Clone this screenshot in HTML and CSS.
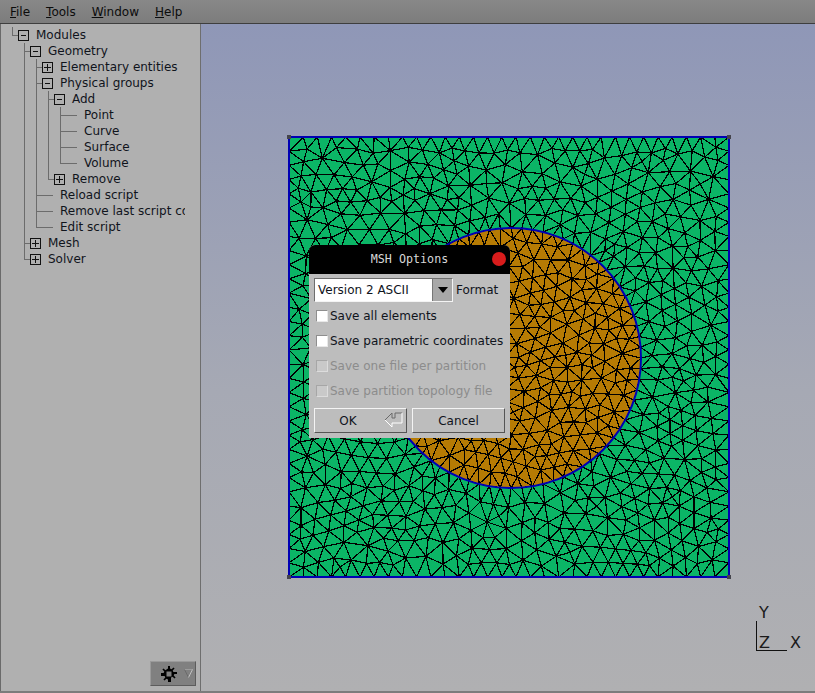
FILE: index.html
```html
<!DOCTYPE html>
<html lang="en">
<head>
<meta charset="utf-8">
<title>Gmsh</title>
<link rel="stylesheet" href="styles.css">
</head>
<body>
<nav class="menubar">
  <span class="menu m-file"><u>F</u>ile</span>
  <span class="menu m-tools"><u>T</u>ools</span>
  <span class="menu m-window"><u>W</u>indow</span>
  <span class="menu m-help"><u>H</u>elp</span>
</nav>
<div class="main">
  <aside class="side">
    <div class="tree">
      <div class="row"><i class="c l"></i><i class="box minus"></i><span class="lb">Modules</span></div>
      <div class="row"><i class="c"></i><i class="c t"></i><i class="box minus"></i><span class="lb">Geometry</span></div>
      <div class="row"><i class="c"></i><i class="c v"></i><i class="c t"></i><i class="box plus"></i><span class="lb">Elementary entities</span></div>
      <div class="row"><i class="c"></i><i class="c v"></i><i class="c t"></i><i class="box minus"></i><span class="lb">Physical groups</span></div>
      <div class="row"><i class="c"></i><i class="c v"></i><i class="c v"></i><i class="c t"></i><i class="box minus"></i><span class="lb">Add</span></div>
      <div class="row"><i class="c"></i><i class="c v"></i><i class="c v"></i><i class="c v"></i><i class="c t"></i><i class="dash"></i><span class="lb">Point</span></div>
      <div class="row"><i class="c"></i><i class="c v"></i><i class="c v"></i><i class="c v"></i><i class="c t"></i><i class="dash"></i><span class="lb">Curve</span></div>
      <div class="row"><i class="c"></i><i class="c v"></i><i class="c v"></i><i class="c v"></i><i class="c t"></i><i class="dash"></i><span class="lb">Surface</span></div>
      <div class="row"><i class="c"></i><i class="c v"></i><i class="c v"></i><i class="c v"></i><i class="c l"></i><i class="dash"></i><span class="lb">Volume</span></div>
      <div class="row"><i class="c"></i><i class="c v"></i><i class="c v"></i><i class="c l"></i><i class="box plus"></i><span class="lb">Remove</span></div>
      <div class="row"><i class="c"></i><i class="c v"></i><i class="c t"></i><i class="dash"></i><span class="lb">Reload script</span></div>
      <div class="row"><i class="c"></i><i class="c v"></i><i class="c t"></i><i class="dash"></i><span class="lb">Remove last script command</span></div>
      <div class="row"><i class="c"></i><i class="c v"></i><i class="c l"></i><i class="dash"></i><span class="lb">Edit script</span></div>
      <div class="row"><i class="c"></i><i class="c t"></i><i class="box plus"></i><span class="lb">Mesh</span></div>
      <div class="row"><i class="c"></i><i class="c l"></i><i class="box plus"></i><span class="lb">Solver</span></div>
    </div>
    <div class="gearbar">
      <button class="gear" type="button">
        <svg class="gear-ico" width="16" height="16" viewBox="0 0 16 16">
          <path d="M7 0h2v2.6l1.6.7 1.9-1.9 1.1 1.1-1.9 1.9.7 1.6H16v2h-2.6l-.7 1.6 1.9 1.9-1.1 1.1-1.9-1.9-1.6.7V16H7v-2.6l-1.6-.7-1.9 1.9-1.1-1.1 1.9-1.9-.7-1.6H0V7h2.6l.7-1.6-1.9-1.9 1.1-1.1 1.9 1.9L7 2.6z" fill="#000"/>
          <rect x="5.5" y="5.5" width="5" height="5" fill="#808080"/>
        </svg>
        <svg class="tri-ico" width="9" height="9" viewBox="0 0 9 9">
          <path d="M.5 .5H8.5" stroke="#9c9c9c" fill="none"/>
          <path d="M.5 .5L4.5 8.5" stroke="#6a6a6a" fill="none"/>
          <path d="M8.5 .5L4.5 8.5" stroke="#c0c0c0" fill="none"/>
        </svg>
      </button>
    </div>
  </aside>
  <section class="view">
    <svg id="mesh" class="mesh" width="446" height="446" viewBox="286 134 446 446" shape-rendering="crispEdges"></svg>
    <div class="axes">
      <span class="ax ax-y">Y</span>
      <span class="ax ax-z">Z</span>
      <span class="ax ax-x">X</span>
    </div>
    <div class="dialog">
      <header class="dlg-title"><span>MSH Options</span><i class="dot"></i></header>
      <div class="dlg-body">
        <div class="format">
          <div class="choice"><span class="choice-val">Version 2 ASCII</span><span class="choice-btn"><i class="arrow"></i></span></div>
          <span class="format-lb">Format</span>
        </div>
        <label class="opt"><i class="cb"></i>Save all elements</label>
        <label class="opt"><i class="cb"></i>Save parametric coordinates</label>
        <label class="opt off"><i class="cb"></i>Save one file per partition</label>
        <label class="opt off"><i class="cb"></i>Save partition topology file</label>
        <div class="btns">
          <button class="btn" type="button"><span class="ok">OK</span>
            <svg class="ret" width="19" height="16" viewBox="0 0 19 16">
              <path d="M1 8L8 1V6H11V1H18" fill="none" stroke="#6a6a6a"/>
              <path d="M1 8L8 15V11H18V1" fill="none" stroke="#fff"/>
            </svg>
          </button>
          <button class="btn" type="button">Cancel</button>
        </div>
      </div>
    </div>
  </section>
</div>
<script src="script.js"></script>
</body>
</html>
```

FILE: styles.css
```css
* { box-sizing: border-box; }
html, body { margin: 0; height: 100%; }
body {
  width: 815px; height: 693px; overflow: hidden;
  font: 12px/16px "DejaVu Sans", sans-serif; color: #10141c;
  display: flex; flex-direction: column; background: #b0b0b0;
}
.menubar {
  height: 24px; flex: none; display: flex; align-items: center; padding-left: 10px;
  background: linear-gradient(#888, #7c7c7c); border-bottom: 1px solid #3e3e3e;
  color: #0c0c0c;
}
.m-file { margin-right: 16px; }
.m-tools { margin-right: 16px; }
.m-window { margin-right: 16px; }
.main { flex: 1; display: flex; min-height: 0; border-bottom: 2px solid #7c7c7c; }
.side {
  width: 201px; flex: none; border-right: 1px solid #6e6e6e; background: #b0b0b0;
  display: flex; flex-direction: column; justify-content: space-between;
  padding: 3px 0 5px 5px; border-left: 1px solid #6a6a6a;
}
.tree { width: 179px; overflow: hidden; }
.row { display: flex; height: 16px; white-space: nowrap; }
.c { flex: none; width: 12px; height: 16px; }
.v { background: linear-gradient(#6c6c6c, #6c6c6c) 6px 0 / 1px 100% no-repeat; }
.t { background:
  linear-gradient(#6c6c6c, #6c6c6c) 6px 0 / 1px 100% no-repeat,
  linear-gradient(#6c6c6c, #6c6c6c) 6px 8px / 6px 1px no-repeat; }
.l { background:
  linear-gradient(#6c6c6c, #6c6c6c) 6px 0 / 1px 9px no-repeat,
  linear-gradient(#6c6c6c, #6c6c6c) 6px 8px / 6px 1px no-repeat; }
.box {
  flex: none; width: 11px; height: 11px; margin: 3px 1px 2px 0;
  border: 1px solid #111; background-color: #b0b0b0;
}
.minus { background-image: linear-gradient(#111, #111); background-size: 5px 1px; background-position: center; background-repeat: no-repeat; }
.plus {
  background-image: linear-gradient(#111, #111), linear-gradient(#111, #111);
  background-size: 7px 1px, 1px 7px; background-position: center; background-repeat: no-repeat;
}
.lb { margin-left: 6px; }
.dash {
  flex: none; width: 11px; height: 16px; margin-right: 1px;
  background: linear-gradient(#6c6c6c, #6c6c6c) 0 8px / 100% 1px no-repeat;
}
.gearbar { display: flex; justify-content: flex-end; padding-right: 4px; }
.gear {
  width: 46px; height: 25px; padding: 0 0 0 10px; display: flex; align-items: center;
  background: #808080; border: 1px solid; border-color: #9a9a9a #5c5c5c #5c5c5c #9a9a9a;
}
.tri-ico { margin-left: 7px; }
.view {
  flex: 1; position: relative;
  background: linear-gradient(#8f97b7, #a6a9b4 55%, #b0b0b2);
}
.mesh { position: absolute; left: 85px; top: 110px; }
.axes { position: absolute; left: 555px; top: 597px; width: 31px; height: 30px;
  border-left: 1px solid #111; border-bottom: 1px solid #111; }
.ax { position: absolute; font: 16px/16px "DejaVu Sans", sans-serif; color: #1a1a1a; }
.ax-y { left: 2px; top: -16px; }
.ax-z { left: 2px; top: 14px; }
.ax-x { left: 33px; top: 14px; }
.dialog {
  position: absolute; left: 108px; top: 221px; width: 201px; height: 193px;
  background: #bdbdbd; border-radius: 6px 6px 0 0;
}
.dlg-title {
  height: 29px; background: #000; color: #d8d8d8; border-radius: 6px 6px 0 0;
  font: 11.7px/29px "DejaVu Sans Mono", monospace; text-align: center; position: relative;
}
.dot { position: absolute; right: 4px; top: 7px; width: 14px; height: 14px; border-radius: 50%; background: #d81c1c; }
.dlg-body { padding: 4px 5px 0; }
.format { display: flex; align-items: center; height: 24px; }
.choice {
  width: 139px; height: 24px; display: flex; background: #fff;
  border: 1px solid; border-color: #6e6e6e #f4f4f4 #f4f4f4 #6e6e6e;
}
.choice-val { flex: 1; padding-left: 3px; line-height: 22px; }
.choice-btn { width: 20px; background: #a8a8a8; display: flex; align-items: center; justify-content: center; border-left: 1px solid #777; }
.arrow { width: 0; height: 0; border: 5px solid transparent; border-top: 6px solid #000; border-bottom: 0; }
.format-lb { margin-left: 3px; }
.opt { display: flex; align-items: center; height: 25px; }
.format + .opt { margin-top: 1px; }
.cb {
  flex: none; width: 12px; height: 12px; margin: 0 2px 0 2px;
  background: #fff; border: 1px solid; border-color: #8e8e8e #e8e8e8 #e8e8e8 #8e8e8e;
}
.off { color: #8c8c8c; }
.off .cb { background: #c9c9c9; border-color: #a6a6a6 #dcdcdc #dcdcdc #a6a6a6; }
.btns { display: flex; gap: 5px; margin-top: 5px; }
.btn {
  width: 93px; height: 25px; padding: 0; position: relative;
  font: 12px/16px "DejaVu Sans", sans-serif; color: #10141c;
  background: #bdbdbd; border: 1px solid; border-color: #f4f4f4 #555 #555 #f4f4f4;
}
.btn .ok { display: block; width: 66px; text-align: center; }
.ret { position: absolute; right: 3px; top: 3px; }
```

FILE: script.js
```js
(function () {
  var svg = document.getElementById('mesh');
  var NS = 'http://www.w3.org/2000/svg';
  var X0 = 289, Y0 = 137, S = 440, CX = 511, CY = 358, R = 130;
  var seed = 12345;
  function rnd() { seed = (seed * 16807) % 2147483647; return seed / 2147483647; }

  var pts = [];
  var i, j;
  var nb = 31;
  for (i = 0; i < nb; i++) {
    var t = i * S / nb;
    pts.push([X0 + t, Y0], [X0 + S - t, Y0 + S], [X0 + S, Y0 + t], [X0, Y0 + S - t]);
  }
  var nc = 76;
  for (i = 0; i < nc; i++) {
    var a = i / nc * Math.PI * 2;
    pts.push([CX + R * Math.cos(a), CY + R * Math.sin(a)]);
  }
  var fixed = pts.length;
  function tooClose(x, y, d) {
    for (var k = 0; k < pts.length; k++) {
      var dx = pts[k][0] - x, dy = pts[k][1] - y;
      if (dx * dx + dy * dy < d * d) return true;
    }
    return false;
  }
  for (i = 0; i < 26000; i++) {
    var x = X0 + 3 + rnd() * (S - 6), y = Y0 + 3 + rnd() * (S - 6);
    var dc = Math.sqrt((x - CX) * (x - CX) + (y - CY) * (y - CY));
    var d = dc < R ? 11 : 12;
    if (!tooClose(x, y, d)) pts.push([x, y]);
  }

  var n = pts.length;
  pts.push([-3000, -3000], [5000, -3000], [1000, 6000]);
  function circ(a, b, c) {
    var A = pts[a], B = pts[b], C = pts[c];
    var D = 2 * (A[0] * (B[1] - C[1]) + B[0] * (C[1] - A[1]) + C[0] * (A[1] - B[1]));
    var a2 = A[0] * A[0] + A[1] * A[1], b2 = B[0] * B[0] + B[1] * B[1], c2 = C[0] * C[0] + C[1] * C[1];
    var ux = (a2 * (B[1] - C[1]) + b2 * (C[1] - A[1]) + c2 * (A[1] - B[1])) / D;
    var uy = (a2 * (C[0] - B[0]) + b2 * (A[0] - C[0]) + c2 * (B[0] - A[0])) / D;
    var dx = A[0] - ux, dy = A[1] - uy;
    return { a: a, b: b, c: c, x: ux, y: uy, r: dx * dx + dy * dy };
  }
  function delaunay() {
    var tris = [circ(n, n + 1, n + 2)];
    for (var q = 0; q < n; q++) {
      var p = pts[q], keep = [], edges = {};
      for (var m = 0; m < tris.length; m++) {
        var tr = tris[m];
        var ddx = p[0] - tr.x, ddy = p[1] - tr.y;
        if (ddx * ddx + ddy * ddy < tr.r) {
          [[tr.a, tr.b], [tr.b, tr.c], [tr.c, tr.a]].forEach(function (e) {
            var key = Math.min(e[0], e[1]) + '_' + Math.max(e[0], e[1]);
            edges[key] = edges[key] ? null : e;
          });
        } else keep.push(tr);
      }
      for (var k in edges) if (edges[k]) keep.push(circ(edges[k][0], edges[k][1], q));
      tris = keep;
    }
    return tris;
  }
  function edgeList(tris) {
    var seen = {}, list = [];
    tris.forEach(function (tr) {
      [[tr.a, tr.b], [tr.b, tr.c], [tr.c, tr.a]].forEach(function (e) {
        if (e[0] >= n || e[1] >= n) return;
        var key = Math.min(e[0], e[1]) + '_' + Math.max(e[0], e[1]);
        if (!seen[key]) { seen[key] = 1; list.push(e); }
      });
    });
    return list;
  }

  // Laplacian smoothing of the free nodes, then triangulate again
  var pass, edgesNow;
  for (pass = 0; pass < 2; pass++) {
    edgesNow = edgeList(delaunay());
    var sx = [], sy = [], cnt = [];
    for (i = 0; i < n; i++) { sx[i] = 0; sy[i] = 0; cnt[i] = 0; }
    edgesNow.forEach(function (e) {
      sx[e[0]] += pts[e[1]][0]; sy[e[0]] += pts[e[1]][1]; cnt[e[0]]++;
      sx[e[1]] += pts[e[0]][0]; sy[e[1]] += pts[e[0]][1]; cnt[e[1]]++;
    });
    for (i = fixed; i < n; i++) {
      if (cnt[i]) {
        pts[i][0] += 0.6 * (sx[i] / cnt[i] - pts[i][0]);
        pts[i][1] += 0.6 * (sy[i] / cnt[i] - pts[i][1]);
      }
    }
  }
  var d1 = '';
  edgeList(delaunay()).forEach(function (e) {
    var A = pts[e[0]], B = pts[e[1]];
    d1 += 'M' + A[0].toFixed(1) + ' ' + A[1].toFixed(1) + 'L' + B[0].toFixed(1) + ' ' + B[1].toFixed(1);
  });

  function add(tag, attrs) {
    var el = document.createElementNS(NS, tag);
    for (var a in attrs) el.setAttribute(a, attrs[a]);
    svg.appendChild(el);
    return el;
  }
  add('rect', { x: X0, y: Y0, width: S, height: S, fill: '#0bb566' });
  add('circle', { cx: CX, cy: CY, r: R, fill: '#b67b04' });
  add('path', { d: d1, stroke: '#000', 'stroke-width': 1.2, fill: 'none' });
  add('circle', { cx: CX, cy: CY, r: R, fill: 'none', stroke: '#0000b4', 'stroke-width': 2, 'shape-rendering': 'auto' });
  add('rect', { x: X0, y: Y0, width: S, height: S, fill: 'none', stroke: '#0000b4', 'stroke-width': 2 });
  [[X0, Y0], [X0 + S, Y0], [X0, Y0 + S], [X0 + S, Y0 + S]].forEach(function (c) {
    add('rect', { x: c[0] - 2, y: c[1] - 2, width: 4, height: 4, fill: '#44444c' });
  });
})();
```
